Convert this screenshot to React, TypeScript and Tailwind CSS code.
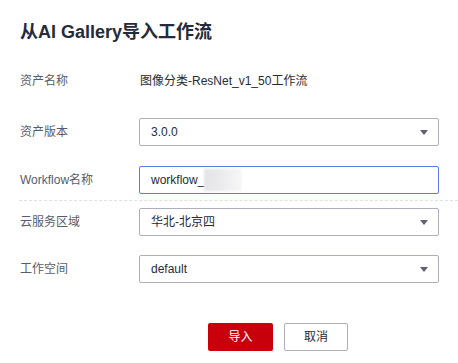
const font = { fontFamily: '"Liberation Sans", "Noto Sans CJK SC", sans-serif' };

const Caret = () => (
  <svg width="8" height="5" viewBox="0 0 8 5" className="shrink-0">
    <path d="M0 0 H8 L4 5 Z" fill="#5e6170" />
  </svg>
);

interface RowProps {
  label: string;
  children: React.ReactNode;
  className?: string;
}

const Row = ({ label, children, className = "" }: RowProps) => (
  <div className={`flex items-center h-[28px] ${className}`}>
    <div className="w-[119px] text-[12px] text-[#575d6c]">{label}</div>
    {children}
  </div>
);

const Select = ({ value }: { value: string }) => (
  <div className="w-[300px] h-[28px] border border-[#adb0b8] rounded-[2px] flex items-center justify-between pl-[11px] pr-[10px] text-[12px] text-[#252b3a]">
    <span>{value}</span>
    <Caret />
  </div>
);

export default function App() {
  return (
    <div style={font} className="w-[458px] h-[363px] bg-white overflow-hidden pt-[20px] pl-5">
      <h1 className="h-[24px] leading-[24px] text-[18px] font-bold text-[#252b3a]">从AI Gallery导入工作流</h1>

      <Row label="资产名称" className="mt-[23px]">
        <span className="text-[12px] text-[#252b3a] pl-[1px]">图像分类-ResNet_v1_50工作流</span>
      </Row>

      <Row label="资产版本" className="mt-[23px]">
        <Select value="3.0.0" />
      </Row>

      <Row label="Workflow名称" className="mt-[20px]">
        <div className="w-[300px] h-[28px] border border-[#5e7ce0] rounded-[2px] flex items-center pl-[11px] text-[12px] text-[#252b3a]">
          <span>workflow_</span>
          <span className="w-[38px] h-[22px] bg-gradient-to-r from-[#e4e4e6] via-[#ececee] to-[#f8f8f9] blur-[1px]" />
        </div>
      </Row>

      <div className="mt-[6px] -ml-px border-t border-dashed border-[#dfe1e6]" />

      <Row label="云服务区域" className="mt-[7px]">
        <Select value="华北-北京四" />
      </Row>

      <Row label="工作空间" className="mt-[19px]">
        <Select value="default" />
      </Row>

      <div className="mt-[40px] pl-[188px] flex gap-[11px]">
        <button className="w-[65px] h-[28px] rounded-[2px] bg-[#c7000b] text-white text-[12px]">导入</button>
        <button className="w-[64px] h-[28px] rounded-[2px] border border-[#adb0b8] bg-white text-[#252b3a] text-[12px]">取消</button>
      </div>
    </div>
  );
}
